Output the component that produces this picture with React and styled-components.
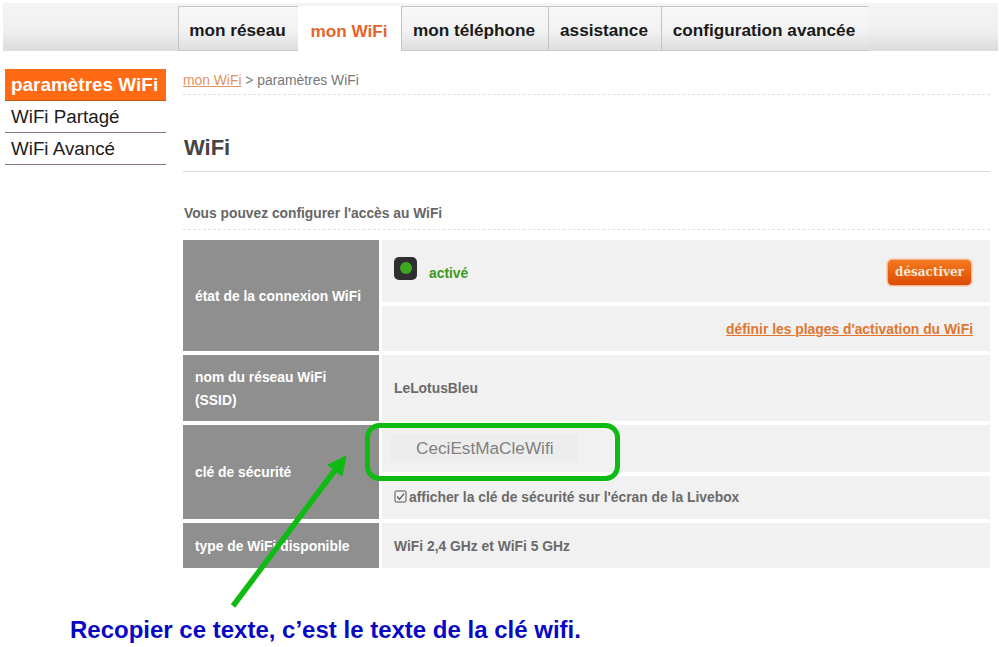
import React from "react";
import styled, { createGlobalStyle } from "styled-components";

const Global = createGlobalStyle`
  html, body { margin: 0; padding: 0; background: #fff; }
  body { font-family: "Liberation Sans", Arial, sans-serif; }
`;

const Page = styled.div`
  position: relative;
  width: 999px;
  height: 647px;
  overflow: hidden;
  padding-top: 3px;
  box-sizing: border-box;
`;

const TopBar = styled.nav`
  display: flex;
  height: 48px;
  margin: 0 1px 0 3px;
  padding-left: 175px;
  background: linear-gradient(#f4f4f4 0%, #f0f0f0 55%, #dcdcdc 100%);
`;

const Tab = styled.a`
  box-sizing: border-box;
  width: ${(p) => p.$w}px;
  margin-top: 3px;
  display: flex;
  align-items: center;
  justify-content: center;
  font-size: 17.2px;
  font-weight: 700;
  color: ${(p) => (p.$active ? "#e8632a" : "#1a1a1a")};
  background: ${(p) => (p.$active ? "#fff" : "linear-gradient(#f8f8f8 0%, #f2f2f2 55%, #dedede 100%)")};
  border-top: 1px solid ${(p) => (p.$active ? "#fff" : "#c4c4c4")};
  border-left: 1px solid ${(p) => (p.$active ? "#fff" : "#c4c4c4")};
  border-bottom: ${(p) => (p.$active ? "none" : "1px solid #c9c9c9")};
  padding: 4px 2px 0 0;
`;

const Body = styled.div`
  display: flex;
  align-items: flex-start;
`;

const SideMenu = styled.ul`
  list-style: none;
  width: 161px;
  margin: 18px 17px 0 5px;
  padding: 0;
`;

const SideItem = styled.li`
  box-sizing: border-box;
  height: 32px;
  padding: 0 6px;
  line-height: 32px;
  font-size: ${(p) => (p.$active ? 18.95 : 18.8)}px;
  font-weight: ${(p) => (p.$active ? 700 : 400)};
  color: ${(p) => (p.$active ? "#fff" : "#1c1c1c")};
  background: ${(p) => (p.$active ? "#ff6a12" : "#fff")};
  border-bottom: 1px solid ${(p) => (p.$active ? "#c4560f" : "#8a7573")};
  white-space: nowrap;
`;

const Main = styled.main`
  width: 807px;
`;

const Breadcrumb = styled.div`
  height: 44px;
  box-sizing: border-box;
  padding-top: 21px;
  border-bottom: 1px dashed #e4e0d4;
  font-size: 13.85px;
  line-height: 17px;
  color: #777;
  white-space: nowrap;
`;

const Crumb = styled.a`
  color: #e39263;
  text-decoration: underline;
`;

const Title = styled.h1`
  box-sizing: border-box;
  height: 77px;
  margin: 0;
  padding: 40px 0 0 1px;
  border-bottom: 1px solid #d8d8d8;
  font-size: 22px;
  line-height: 26px;
  font-weight: 700;
  color: #444;
`;

const Intro = styled.h2`
  box-sizing: border-box;
  height: 58px;
  margin: 0 0 10px;
  padding: 34px 0 0 1px;
  border-bottom: 1px dashed #e4e0d4;
  font-size: 13.8px;
  line-height: 16px;
  font-weight: 700;
  color: #666;
`;

const Table = styled.div`
  display: grid;
  grid-template-columns: 196px 608px;
  grid-template-rows: 62px 45px 66px 47px 43px 45px;
  gap: 4px 3px;
`;

const Label = styled.div`
  grid-row: span ${(p) => p.$span || 1};
  display: flex;
  align-items: center;
  padding: 1px 12px 0;
  box-sizing: border-box;
  background: #8f8f8f;
  color: #fff;
  font-size: 13.85px;
  font-weight: 700;
  line-height: 23px;
`;

const Cell = styled.div`
  display: flex;
  align-items: center;
  justify-content: ${(p) => p.$justify || "flex-start"};
  box-sizing: border-box;
  padding: 0 18px 0 12px;
  background: #f1f1f1;
  color: #6a6a6a;
  font-size: 13.85px;
  font-weight: 700;
`;

const Led = styled.span`
  width: 23px;
  height: 23px;
  margin: -6px 12px 0 0;
  border-radius: 5px;
  background: #2f2f33;
  display: flex;
  align-items: center;
  justify-content: center;
  &::after {
    content: "";
    width: 12px;
    height: 12px;
    border-radius: 50%;
    background: #3da81c;
  }
`;

const Active = styled.span`
  color: #3c9a1e;
  margin-top: 3px;
`;

const Disable = styled.button`
  margin-left: auto;
  margin-top: 2px;
  height: 27px;
  width: 85px;
  padding: 0;
  border: 1px solid #f0b590;
  border-radius: 5px;
  background: linear-gradient(#f47a1e, #dc4c06);
  box-shadow: 0 0 0 1px #f6dac8;
  color: #fbe6d8;
  font-family: "DejaVu Serif", "Liberation Serif", serif;
  font-size: 12px;
  font-weight: 700;
`;

const RangeLink = styled.a`
  color: #e0762f;
  text-decoration: underline;
  margin-right: -1px;
`;

const KeyBox = styled.span`
  box-sizing: border-box;
  width: 187px;
  height: 29px;
  margin: 0 0 0 -3px;
  padding-left: 25px;
  display: flex;
  align-items: center;
  background: #ededed;
  color: #808080;
  font-size: 17.2px;
  font-weight: 400;
`;

const Check = styled.span`
  display: flex;
  align-items: center;
  gap: 2px;
  margin-top: -2px;
`;

const Overlay = styled.svg`
  position: absolute;
  left: 0;
  top: 0;
  pointer-events: none;
`;

const Caption = styled.p`
  position: absolute;
  left: 70px;
  top: 616px;
  margin: 0;
  font-size: 24px;
  line-height: 28px;
  font-weight: 700;
  color: #0707c4;
  white-space: nowrap;
`;

export default function App() {
  return (
    <Page>
      <Global />
      <TopBar>
        <Tab $w={120}>mon réseau</Tab>
        <Tab $w={103} $active>mon WiFi</Tab>
        <Tab $w={147}>mon téléphone</Tab>
        <Tab $w={113}>assistance</Tab>
        <Tab $w={207}>configuration avancée</Tab>
      </TopBar>
      <Body>
        <SideMenu>
          <SideItem $active>paramètres WiFi</SideItem>
          <SideItem>WiFi Partagé</SideItem>
          <SideItem>WiFi Avancé</SideItem>
        </SideMenu>
        <Main>
          <Breadcrumb>
            <Crumb>mon WiFi</Crumb> &gt; paramètres WiFi
          </Breadcrumb>
          <Title>WiFi</Title>
          <Intro>Vous pouvez configurer l'accès au WiFi</Intro>
          <Table>
            <Label $span={2}>état de la connexion WiFi</Label>
            <Cell>
              <Led />
              <Active>activé</Active>
              <Disable>désactiver</Disable>
            </Cell>
            <Cell $justify="flex-end">
              <RangeLink>définir les plages d'activation du WiFi</RangeLink>
            </Cell>
            <Label>nom du réseau WiFi<br />(SSID)</Label>
            <Cell>LeLotusBleu</Cell>
            <Label $span={2}>clé de sécurité</Label>
            <Cell>
              <KeyBox>CeciEstMaCleWifi</KeyBox>
            </Cell>
            <Cell>
              <Check>
                <svg width="13" height="13" viewBox="0 0 13 13" fill="none" stroke="#555" strokeWidth="1">
                  <rect x="1" y="1" width="11" height="11" rx="1" />
                  <path d="M3.2 6.5 L5.6 9.2 L10 3.6" strokeWidth="1.2" />
                </svg>
                afficher la clé de sécurité sur l'écran de la Livebox
              </Check>
            </Cell>
            <Label>type de WiFi disponible</Label>
            <Cell>WiFi 2,4 GHz et WiFi 5 GHz</Cell>
          </Table>
        </Main>
      </Body>
      <Overlay width="999" height="647" viewBox="0 0 999 647">
        <rect x="367.5" y="425.5" width="250" height="53" rx="12" fill="none" stroke="#0dbb12" strokeWidth="5" />
        <path d="M233 606 L335 470" stroke="#0dbb12" strokeWidth="5.5" fill="none" />
        <path d="M346 456 L342 476 L328 465 Z" fill="#0dbb12" stroke="#0dbb12" strokeWidth="1" />
      </Overlay>
      <Caption>Recopier ce texte, c’est le texte de la clé wifi.</Caption>
    </Page>
  );
}
